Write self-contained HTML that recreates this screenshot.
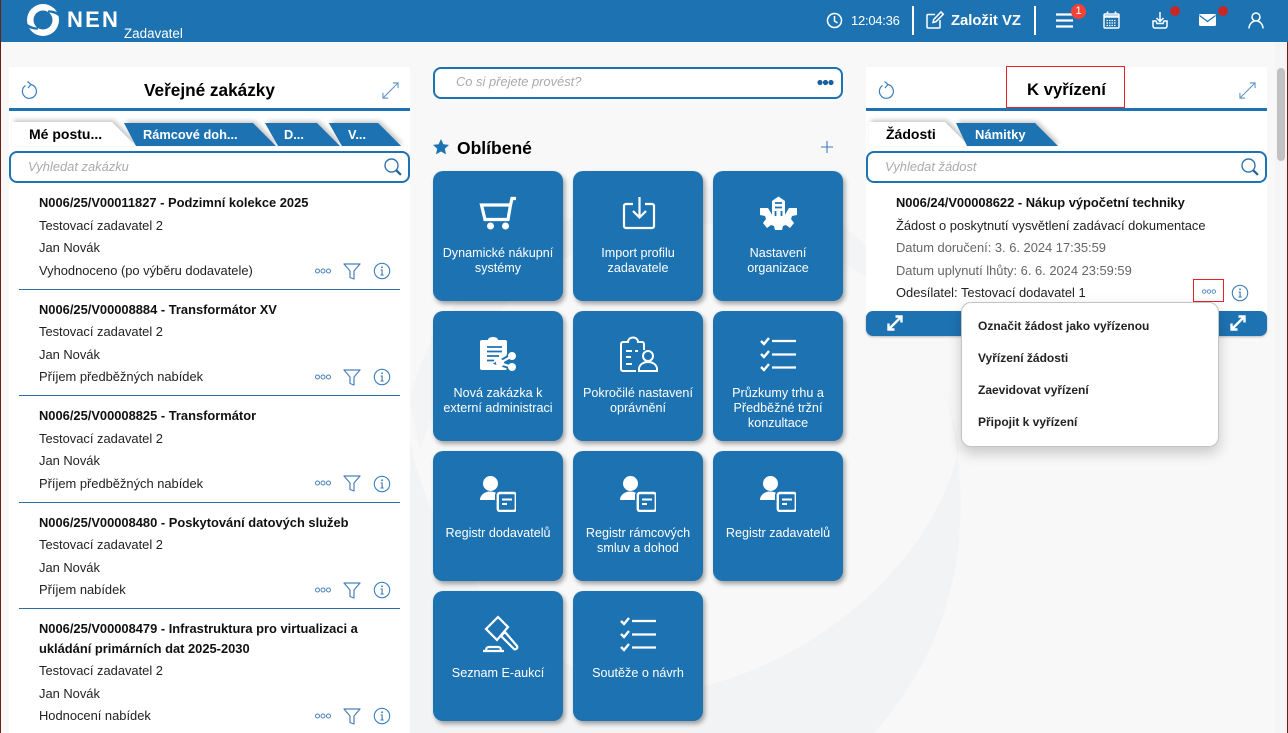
<!DOCTYPE html>
<html lang="cs"><head><meta charset="utf-8"><title>NEN</title>
<style>
html,body{margin:0;padding:0;width:1288px;height:733px;overflow:hidden;background:#f8f8f8;font-family:"Liberation Sans",Arial,sans-serif;color:#111}
*{box-sizing:border-box}
.a{position:absolute}
.t{position:absolute;white-space:nowrap;font-size:12.9px;line-height:20px;color:#222;margin-top:1px}
.b{font-weight:bold;color:#111;font-size:12.9px}
.g{color:#666}
.panel{position:absolute;background:#fff}
.line{position:absolute;height:3px;background:#1d73b2}
.search{position:absolute;height:32px;border:2px solid #1d73b2;border-radius:8px;background:#fff}
.ph{position:absolute;white-space:nowrap;font-style:italic;font-size:12.9px;line-height:20px;color:#aaa}
.sep{position:absolute;left:19px;width:381px;height:1px;background:#2c6f9f}
.tile{position:absolute;width:130px;height:130px;border-radius:10px;background:#1d73b2;box-shadow:2px 3px 5px rgba(0,0,0,.35);color:#fff;font-size:12.6px;line-height:15px;text-align:center}
.tile svg{position:absolute;left:47px;top:25px;width:36px;height:36px;overflow:visible}
.tile div{position:absolute;left:2px;right:2px;top:75px}
.ic{position:absolute;overflow:visible}
.tab{position:absolute;white-space:nowrap;font-weight:bold;font-size:12.8px;line-height:20px;color:#fff;margin-top:1px}
.mi{position:absolute;left:978px;white-space:nowrap;font-size:12px;line-height:20px;font-weight:bold;color:#222}
</style></head><body>
<svg width="0" height="0" style="position:absolute"><defs>
<symbol id="dots" viewBox="0 0 18 8"><g fill="none" stroke="#4a80b8" stroke-width="1"><circle cx="3.500" cy="4" r="2"/><circle cx="9" cy="4" r="2"/><circle cx="14.500" cy="4" r="2"/></g></symbol>
<symbol id="fun" viewBox="0 0 18 17"><path d="M1 1h16l-6 7v8l-4-1.500V8z" fill="none" stroke="#4a80b8" stroke-width="1.200" stroke-linejoin="round"/></symbol>
<symbol id="inf" viewBox="0 0 18 18"><circle cx="9" cy="9" r="7.700" fill="none" stroke="#3d7fc0" stroke-width="1.100"/><path d="M7.600 8h1.500v5M7.500 13h3.200" fill="none" stroke="#3a76ae" stroke-width="1.100"/><circle cx="9" cy="5.300" r=".9" fill="#3a76ae"/></symbol>
<symbol id="ref" viewBox="0 0 16 18"><path d="M4.500 4.500A7 7 0 1 0 10 3.500" fill="none" stroke="#3d7fc0" stroke-width="1.200"/><path d="M6.500 .5L10 3.500 7 7" fill="none" stroke="#3d7fc0" stroke-width="1.200"/></symbol>
<symbol id="exp" viewBox="0 0 18 18"><path d="M1 17L7 11M11 7L17 1M11.500 1h5.500v5.500M1 11.500V17h5.500" fill="none" stroke="#5b8fc6" stroke-width="1.100"/><path d="M7 11L11 7" stroke="#5b8fc6" stroke-width="1.100"/></symbol>
<symbol id="mag" viewBox="0 0 18 18"><circle cx="7.500" cy="7.500" r="6.500" fill="none" stroke="#2f76b5" stroke-width="1.400"/><path d="M12.300 12.300l4.600 4.600" stroke="#1f5f96" stroke-width="2.200"/></symbol>
<symbol id="wexp" viewBox="0 0 16 16"><path d="M2 14L14 2M8.500 1.500h6v6M1.500 8.500v6h6" fill="none" stroke="#fff" stroke-width="2.400"/></symbol>
<symbol id="pd" viewBox="0 0 36 36"><circle cx="10.500" cy="7.500" r="7.500" fill="#fff"/><path d="M0 24c0-5 5-8.500 10-8.500 2 0 4 .4 6 1.300-.8.7-1 1.600-1 2.700V24z" fill="#fff"/><rect x="17.800" y="17" width="18" height="18" rx="2" fill="none" stroke="#fff" stroke-width="2.400"/><path d="M22 23.500h10M22 28h5" stroke="#fff" stroke-width="2" fill="none"/></symbol>
<symbol id="chk" viewBox="0 0 36 36"><g fill="none" stroke="#fff"><path d="M12 5h24M12 18.500h24M12 31.500h24" stroke-width="2.200"/><path d="M1 5l3 3 5-6M1 18l3 3 5-6M1 31l3 3 5-6" stroke-width="2.400"/></g></symbol>
</defs></svg>

<!-- background swirl -->
<svg class="a" style="left:0;top:42px" width="1288" height="691" viewBox="0 42 1288 691">
<path d="M924 333C975 450 985 610 874 733H410V440C440 600 590 720 707 685 810 660 930 570 959 450 955 420 940 370 924 333Z" fill="#f2f3f5"/>
<path d="M410 400C440 260 600 170 760 190 840 205 890 260 924 333 860 250 760 215 660 225 560 240 470 310 420 450Z" fill="#f3f4f6"/>
</svg>

<!-- header -->
<div class="a" style="left:0;top:0;width:1288px;height:42px;background:#1d73b2"></div>
<div class="a" style="left:0;top:0;width:1px;height:733px;background:#6b1e14"></div>
<div class="a" style="left:1287px;top:42px;width:1px;height:691px;background:#6b1e14"></div>
<svg class="ic" style="left:27px;top:4px" width="32" height="32" viewBox="0 0 32 32"><circle cx="16" cy="16" r="16" fill="#fff"/><circle cx="16" cy="16" r="9.500" fill="#1d73b2"/><path d="M21 6.500C25 6 29 7 33 10L33 13C29 10 25 8.500 21 8.500z" fill="#1d73b2"/><path d="M11 25.500C7 26 3 25-1 22L-1 19C3 22 7 23.500 11 23.500z" fill="#1d73b2"/></svg>
<div class="t" style="left:67px;top:7px;font-weight:bold;font-size:22px;color:#fff;letter-spacing:2.200px;line-height:24px">NEN</div>
<div class="t" style="left:124px;top:23px;font-size:13.400px;color:#fff">Zadavatel</div>
<svg class="ic" style="left:826px;top:12px" width="17" height="17" viewBox="0 0 17 17" fill="none" stroke="#fff" stroke-width="1.500"><circle cx="8.500" cy="8.500" r="7"/><path d="M8.500 4v5l3 2"/></svg>
<div class="t" style="left:851px;top:10px;font-size:13px;letter-spacing:-.25px;color:#fff">12:04:36</div>
<div class="a" style="left:912px;top:6px;width:2px;height:29px;background:#fff"></div>
<svg class="ic" style="left:926px;top:11px" width="18" height="18" viewBox="0 0 18 18" fill="none" stroke="#fff" stroke-width="1.500"><path d="M9 3.500H2a1 1 0 0 0-1 1V16a1 1 0 0 0 1 1h11a1 1 0 0 0 1-1V9"/><path d="M7 11.500l.7-3L15 1l2.300 2.300L10 10.700z"/></svg>
<div class="t" style="left:951px;top:10px;font-weight:bold;font-size:14.800px;color:#fff">Založit VZ</div>
<div class="a" style="left:1034px;top:6px;width:2px;height:29px;background:#fff"></div>
<svg class="ic" style="left:1056px;top:13px" width="17" height="15" viewBox="0 0 17 15" stroke="#fff" stroke-width="2.200"><path d="M0 1.500h17M0 7.500h17M0 13.500h17"/></svg>
<div class="a" style="left:1071px;top:4px;width:15px;height:15px;border-radius:50%;background:#f44336;color:#fff;font-size:11px;line-height:15px;text-align:center">1</div>
<svg class="ic" style="left:1103px;top:11px" width="17" height="18" viewBox="0 0 17 18" fill="none" stroke="#fff"><rect x="1" y="3" width="15" height="14" rx="1" stroke-width="1.400"/><path d="M1 5.500h15" stroke-width="2.500"/><path d="M4.500 0.500v3M12.500 0.500v3" stroke-width="1.600"/><path d="M3.500 9.500h10M3.500 12h10M3.500 14.500h10" stroke-width="1.200" stroke-dasharray="1.500 1"/></svg>
<svg class="ic" style="left:1152px;top:12px" width="16" height="17" viewBox="0 0 16 17" fill="none" stroke="#fff" stroke-width="1.500"><path d="M8 0v9M4.500 6L8 9.500 11.500 6"/><path d="M4 9H1v5a2 2 0 0 0 2 2h10a2 2 0 0 0 2-2V9h-3l-1 2.500H5z"/></svg>
<div class="a" style="left:1170px;top:6px;width:10px;height:10px;border-radius:50%;background:#c62828"></div>
<svg class="ic" style="left:1199px;top:14px" width="17" height="12" viewBox="0 0 17 12"><rect width="17" height="12" rx="1.500" fill="#fff"/><path d="M0.500 1.500L8.500 7.500 16.500 1.500" fill="none" stroke="#1d73b2" stroke-width="1.200"/></svg>
<div class="a" style="left:1218px;top:6px;width:10px;height:10px;border-radius:50%;background:#c62828"></div>
<svg class="ic" style="left:1248px;top:12px" width="16" height="17" viewBox="0 0 16 17" fill="none" stroke="#fff" stroke-width="1.500"><circle cx="8" cy="5" r="4"/><path d="M1 16.500c0-4 3-7 5.500-7.500M15 16.500c0-4-3-7-5.500-7.500"/></svg>

<!-- scrollbar -->
<div class="a" style="left:1275px;top:42px;width:12px;height:691px;background:#f5f5f5"></div>
<div class="a" style="left:1277px;top:68px;width:8px;height:93px;border-radius:4px;background:#c1c1c1"></div>

<!-- LEFT PANEL -->
<div class="panel" style="left:9px;top:67px;width:401px;height:666px"></div>
<svg class="ic" style="left:21px;top:81px" width="16" height="18"><use href="#ref"/></svg>
<div class="t" style="left:144px;top:78px;font-size:17.200px;font-weight:bold;color:#000;line-height:22px">Veřejné zakázky</div>
<svg class="ic" style="left:382px;top:82px" width="17" height="17"><use href="#exp"/></svg>
<div class="line" style="left:9px;top:108px;width:401px"></div>
<svg class="ic" style="left:9px;top:118px;filter:drop-shadow(2px -2px 2px rgba(0,0,0,.22))" width="402" height="30" viewBox="9 118 402 30">
<path d="M329 123h49l23 23h-59z" fill="#1d73b2"/>
<path d="M12 122h100l24 24H12z" fill="#fff"/>
<path d="M124 123h129l23 23H136z" fill="#1d73b2"/>
<path d="M265 123h52l23 23h-62z" fill="#1d73b2"/>
<path d="M329 123h49l23 23h-59z" fill="#1d73b2"/>
</svg>
<div class="tab" style="left:29px;top:123px;color:#000;font-size:14px">Mé postu...</div>
<div class="tab" style="left:143px;top:124px">Rámcové doh...</div>
<div class="tab" style="left:284px;top:124px">D...</div>
<div class="tab" style="left:348px;top:124px">V...</div>
<div class="search" style="left:9px;top:151px;width:401px"></div>
<div class="ph" style="left:28px;top:157px">Vyhledat zakázku</div>
<svg class="ic" style="left:384px;top:158px" width="18" height="18"><use href="#mag"/></svg>

<div class="t b" style="left:39px;top:192px">N006/25/V00011827 - Podzimní kolekce 2025</div>
<div class="t" style="left:39px;top:215px">Testovací zadavatel 2</div>
<div class="t" style="left:39px;top:237px">Jan Novák</div>
<div class="t" style="left:39px;top:260px">Vyhodnoceno (po výběru dodavatele)</div>
<svg class="ic" style="left:314px;top:267px" width="18" height="8"><use href="#dots"/></svg>
<svg class="ic" style="left:343px;top:263px" width="18" height="17"><use href="#fun"/></svg>
<svg class="ic" style="left:373px;top:262px" width="18" height="18"><use href="#inf"/></svg>
<div class="sep" style="top:289px"></div>

<div class="t b" style="left:39px;top:299px">N006/25/V00008884 - Transformátor XV</div>
<div class="t" style="left:39px;top:321px">Testovací zadavatel 2</div>
<div class="t" style="left:39px;top:344px">Jan Novák</div>
<div class="t" style="left:39px;top:366px">Příjem předběžných nabídek</div>
<svg class="ic" style="left:314px;top:373px" width="18" height="8"><use href="#dots"/></svg>
<svg class="ic" style="left:343px;top:369px" width="18" height="17"><use href="#fun"/></svg>
<svg class="ic" style="left:373px;top:368px" width="18" height="18"><use href="#inf"/></svg>
<div class="sep" style="top:395px"></div>

<div class="t b" style="left:39px;top:405px">N006/25/V00008825 - Transformátor</div>
<div class="t" style="left:39px;top:428px">Testovací zadavatel 2</div>
<div class="t" style="left:39px;top:450px">Jan Novák</div>
<div class="t" style="left:39px;top:473px">Příjem předběžných nabídek</div>
<svg class="ic" style="left:314px;top:479px" width="18" height="8"><use href="#dots"/></svg>
<svg class="ic" style="left:343px;top:475px" width="18" height="17"><use href="#fun"/></svg>
<svg class="ic" style="left:373px;top:475px" width="18" height="18"><use href="#inf"/></svg>
<div class="sep" style="top:502px"></div>

<div class="t b" style="left:39px;top:512px">N006/25/V00008480 - Poskytování datových služeb</div>
<div class="t" style="left:39px;top:534px">Testovací zadavatel 2</div>
<div class="t" style="left:39px;top:557px">Jan Novák</div>
<div class="t" style="left:39px;top:579px">Příjem nabídek</div>
<svg class="ic" style="left:314px;top:586px" width="18" height="8"><use href="#dots"/></svg>
<svg class="ic" style="left:343px;top:582px" width="18" height="17"><use href="#fun"/></svg>
<svg class="ic" style="left:373px;top:581px" width="18" height="18"><use href="#inf"/></svg>
<div class="sep" style="top:608px"></div>

<div class="t b" style="left:39px;top:618px">N006/25/V00008479 - Infrastruktura pro virtualizaci a</div>
<div class="t b" style="left:39px;top:638px">ukládání primárních dat 2025-2030</div>
<div class="t" style="left:39px;top:660px">Testovací zadavatel 2</div>
<div class="t" style="left:39px;top:683px">Jan Novák</div>
<div class="t" style="left:39px;top:705px">Hodnocení nabídek</div>
<svg class="ic" style="left:314px;top:712px" width="18" height="8"><use href="#dots"/></svg>
<svg class="ic" style="left:343px;top:708px" width="18" height="17"><use href="#fun"/></svg>
<svg class="ic" style="left:373px;top:707px" width="18" height="18"><use href="#inf"/></svg>

<!-- CENTER -->
<div class="search" style="left:433px;top:67px;width:410px"></div>
<div class="ph" style="left:456px;top:72px">Co si přejete provést?</div>
<svg class="ic" style="left:817px;top:79px" width="17" height="7" fill="#1d5f9c"><circle cx="3" cy="3.500" r="2.600"/><circle cx="8.500" cy="3.500" r="2.600"/><circle cx="14" cy="3.500" r="2.600"/></svg>
<svg class="ic" style="left:433px;top:139px" width="16" height="16" viewBox="0 0 16 16"><path d="M8 0l2.400 5.300 5.600.6-4.200 3.800 1.200 5.700L8 12.500 3 15.400l1.200-5.700L0 5.900l5.600-.6z" fill="#1d73b2"/></svg>
<div class="t" style="left:457px;top:136px;font-size:17.500px;font-weight:bold;color:#000;line-height:22px">Oblíbené</div>
<svg class="ic" style="left:821px;top:141px" width="12" height="12" stroke="#3d7fc0" stroke-width="1.100"><path d="M6 0v12M0 6h12"/></svg>

<div class="tile" style="left:433px;top:171px"><svg viewBox="0 0 36 36" fill="none" stroke="#fff" stroke-width="3.200"><path d="M36 2.500h-4l-1.500 6.500H1.500l3.500 14.500h23L30.500 9"/><circle cx="10.500" cy="30" r="3.500" fill="#fff" stroke="none"/><circle cx="25.500" cy="30" r="3.500" fill="#fff" stroke="none"/></svg><div>Dynamické nákupní systémy</div></div>

<div class="tile" style="left:573px;top:171px"><svg viewBox="0 0 36 36" fill="none" stroke="#fff" stroke-width="2.200"><path d="M13 8H6a2 2 0 0 0-2 2v20a2 2 0 0 0 2 2h26a2 2 0 0 0 2-2V10a2 2 0 0 0-2-2h-7"/><path d="M19.500 1v20M13 15l6.500 6.500L26 15"/></svg><div>Import profilu zadavatele</div></div>

<div class="tile" style="left:713px;top:171px"><svg viewBox="0 0 36 36"><path d="M0 12h8l3 5a8 8 0 0 0 15 0l3-5h8v7l-5 1-1 3 3 4-4 5-4-3-3 1-1 4h-7l-1-4-3-1-4 3-4-5 3-4-1-3-5-1z" fill="#fff"/><path d="M12 5l6.500-4.500L25 5v15a8 8 0 0 1-13 0z" fill="#fff"/><path d="M15 7h7M15 11.500h7" stroke="#1d73b2" stroke-width="1.800"/><path d="M15.500 15v5M21.500 15v5" stroke="#1d73b2" stroke-width="1.800"/></svg><div>Nastavení<br>organizace</div></div>

<div class="tile" style="left:433px;top:311px"><svg viewBox="0 0 36 36"><path d="M2 4h6c0-4 10-4 10 0h7a2 2 0 0 1 2 2v26a2 2 0 0 1-2 2H2a2 2 0 0 1-2-2V6a2 2 0 0 1 2-2z" fill="#fff"/><path d="M7 11h15M7 15.500h15M7 20h12M7 24.500h7" stroke="#1d73b2" stroke-width="1.800"/><path d="M32 20l-12 7 12 4" stroke="#1d73b2" stroke-width="6" fill="none"/><circle cx="32" cy="20" r="5.500" fill="#1d73b2"/><circle cx="32" cy="31" r="5.500" fill="#1d73b2"/><path d="M32 20l-12 7 12 4" stroke="#fff" stroke-width="2.200" fill="none"/><circle cx="32" cy="20" r="4" fill="#fff"/><circle cx="20" cy="27" r="4" fill="#fff"/><circle cx="32" cy="31" r="4" fill="#fff"/></svg><div>Nová zakázka k<br>externí administraci</div></div>

<div class="tile" style="left:573px;top:311px"><svg viewBox="0 0 36 36" fill="none" stroke="#fff" stroke-width="2"><path d="M16 35H3a2 2 0 0 1-2-2V8a2 2 0 0 1 2-2h5c0-6 10-6 10 0h4a2 2 0 0 1 2 2v6"/><path d="M6 15h6M6 21h5M15 15h3M6 28h6"/><circle cx="28" cy="20" r="5"/><path d="M19 35v-2c0-4 4-7 9-7s9 3 9 7v2z"/></svg><div>Pokročilé nastavení<br>oprávnění</div></div>

<div class="tile" style="left:713px;top:311px"><svg viewBox="0 0 36 36"><use href="#chk"/></svg><div>Průzkumy trhu a<br>Předběžné tržní<br>konzultace</div></div>

<div class="tile" style="left:433px;top:451px"><svg viewBox="0 0 36 36"><use href="#pd"/></svg><div>Registr dodavatelů</div></div>
<div class="tile" style="left:573px;top:451px"><svg viewBox="0 0 36 36"><use href="#pd"/></svg><div>Registr rámcových<br>smluv a dohod</div></div>
<div class="tile" style="left:713px;top:451px"><svg viewBox="0 0 36 36"><use href="#pd"/></svg><div>Registr zadavatelů</div></div>

<div class="tile" style="left:433px;top:591px"><svg viewBox="0 0 36 36" fill="none" stroke="#fff" stroke-width="2.200"><path d="M18 1l10 10-11 13L6 13z"/><path d="M23 18l-2 2 13 13a2.200 2.200 0 0 0 3-3L25 16z"/><path d="M3 35h21M6 35c0-3 1-4 3-4h9c2 0 3 1 3 4"/></svg><div>Seznam E-aukcí</div></div>
<div class="tile" style="left:573px;top:591px"><svg viewBox="0 0 36 36"><use href="#chk"/></svg><div>Soutěže o návrh</div></div>

<!-- RIGHT PANEL -->
<div class="panel" style="left:866px;top:67px;width:401px;height:250px"></div>
<div class="a" style="left:866px;top:311px;width:401px;height:25px;background:#1d73b2;border-radius:7px;box-shadow:0 1px 2px rgba(0,0,0,.25)"></div>
<svg class="ic" style="left:878px;top:81px" width="16" height="18"><use href="#ref"/></svg>
<div class="a" style="left:1006px;top:66px;width:119px;height:42px;border:1px solid #e8212e"></div>
<div class="t" style="left:1027px;top:78px;font-size:16.700px;font-weight:bold;color:#000;line-height:22px">K vyřízení</div>
<svg class="ic" style="left:1239px;top:82px" width="17" height="17"><use href="#exp"/></svg>
<div class="line" style="left:866px;top:108px;width:401px"></div>
<svg class="ic" style="left:866px;top:118px;filter:drop-shadow(2px -2px 2px rgba(0,0,0,.22))" width="200" height="30" viewBox="866 118 200 30">
<path d="M869 122h76l24 24H869z" fill="#fff"/>
<path d="M956 123h79l23 23h-91z" fill="#1d73b2"/>
</svg>
<div class="tab" style="left:886px;top:123px;color:#000;font-size:14px">Žádosti</div>
<div class="tab" style="left:975px;top:124px;font-size:13px">Námitky</div>
<div class="search" style="left:866px;top:151px;width:401px"></div>
<div class="ph" style="left:885px;top:157px">Vyhledat žádost</div>
<svg class="ic" style="left:1241px;top:158px" width="18" height="18"><use href="#mag"/></svg>

<div class="t b" style="left:896px;top:192px">N006/24/V00008622 - Nákup výpočetní techniky</div>
<div class="t" style="left:896px;top:215px">Žádost o poskytnutí vysvětlení zadávací dokumentace</div>
<div class="t g" style="left:896px;top:237px">Datum doručení: 3. 6. 2024 17:35:59</div>
<div class="t g" style="left:896px;top:260px">Datum uplynutí lhůty: 6. 6. 2024 23:59:59</div>
<div class="t" style="left:896px;top:282px">Odesílatel: Testovací dodavatel 1</div>
<div class="a" style="left:1193px;top:279px;width:31px;height:23px;border:1px solid #e8212e"></div>
<svg class="ic" style="left:1201px;top:288px" width="16" height="7"><use href="#dots"/></svg>
<svg class="ic" style="left:1231px;top:284px" width="18" height="18"><use href="#inf"/></svg>
<svg class="ic" style="left:887px;top:315px" width="16" height="16"><use href="#wexp"/></svg>
<svg class="ic" style="left:1230px;top:315px" width="16" height="16"><use href="#wexp"/></svg>

<div class="a" style="left:961px;top:302px;width:258px;height:145px;background:#fff;border:1px solid #c4c4c4;border-radius:10px;box-shadow:0 6px 14px rgba(0,0,0,.2)"></div>
<div class="mi" style="top:316px">Označit žádost jako vyřízenou</div>
<div class="mi" style="top:348px">Vyřízení žádosti</div>
<div class="mi" style="top:380px">Zaevidovat vyřízení</div>
<div class="mi" style="top:412px">Připojit k vyřízení</div>
</body></html>
